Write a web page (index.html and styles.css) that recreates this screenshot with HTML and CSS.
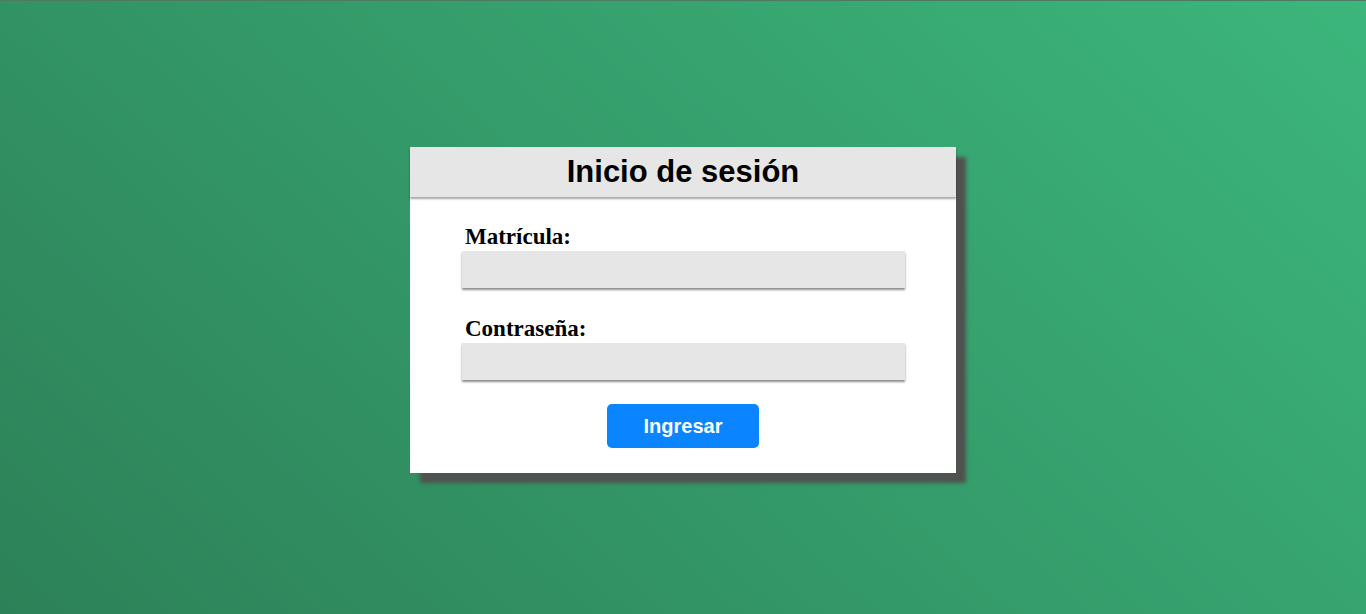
FILE: index.html
```html
<!DOCTYPE html>
<html lang="es">
<head>
<meta charset="utf-8">
<title>Inicio de sesión</title>
<link rel="stylesheet" href="styles.css">
</head>
<body>
<main class="page">
  <form class="card">
    <h1 class="card-title">Inicio de sesión</h1>
    <div class="card-body">
      <label class="field">
        <span class="field-label">Matrícula:</span>
        <input class="field-input" type="text">
      </label>
      <label class="field">
        <span class="field-label">Contraseña:</span>
        <input class="field-input" type="password">
      </label>
      <div class="actions">
        <button class="btn" type="button">Ingresar</button>
      </div>
    </div>
  </form>
</main>
</body>
</html>
```
FILE: styles.css
```css
html, body {
  margin: 0;
  padding: 0;
  height: 100%;
}
body {
  background: linear-gradient(43deg, #2d8158 0%, #3cb67c 100%);
  border-top: 1px solid #4d7a62;
  box-sizing: border-box;
  font-family: "Liberation Serif", serif;
}
.page {
  display: flex;
  justify-content: center;
  padding-top: 146px;
}
.card {
  width: 546px;
  background: #fff;
  box-shadow: 10px 10px 4px #4f524f;
  margin: 0;
}
.card-title {
  margin: 0;
  height: 50px;
  line-height: 49px;
  background: #e6e6e6;
  text-align: center;
  font-family: "Liberation Sans", Arial, sans-serif;
  font-weight: bold;
  font-size: 31px;
  color: #000;
  box-shadow: 0 2px 2px rgba(0,0,0,0.35);
  position: relative;
}
.card-body {
  padding: 26px 51px 25px 52px;
  display: flex;
  flex-direction: column;
}
.field {
  display: flex;
  flex-direction: column;
  margin-bottom: 27px;
}
.field-label {
  font-size: 23px;
  font-weight: bold;
  padding-left: 3px;
  line-height: 28px;
}
.field-input {
  height: 37px;
  box-sizing: border-box;
  border: none;
  background: #e6e6e6;
  box-shadow: 0 2px 2px rgba(0,0,0,0.45);
  margin: 0;
  padding: 0 8px;
  font-size: 16px;
}
.actions {
  display: flex;
  justify-content: center;
  margin-top: -3px;
  padding-right: 1px;
}
.btn {
  width: 152px;
  height: 44px;
  border: none;
  border-radius: 5px;
  background: #0a84ff;
  color: #fff;
  font-family: "Liberation Sans", Arial, sans-serif;
  font-weight: bold;
  font-size: 20px;
  padding: 0;
}
```
